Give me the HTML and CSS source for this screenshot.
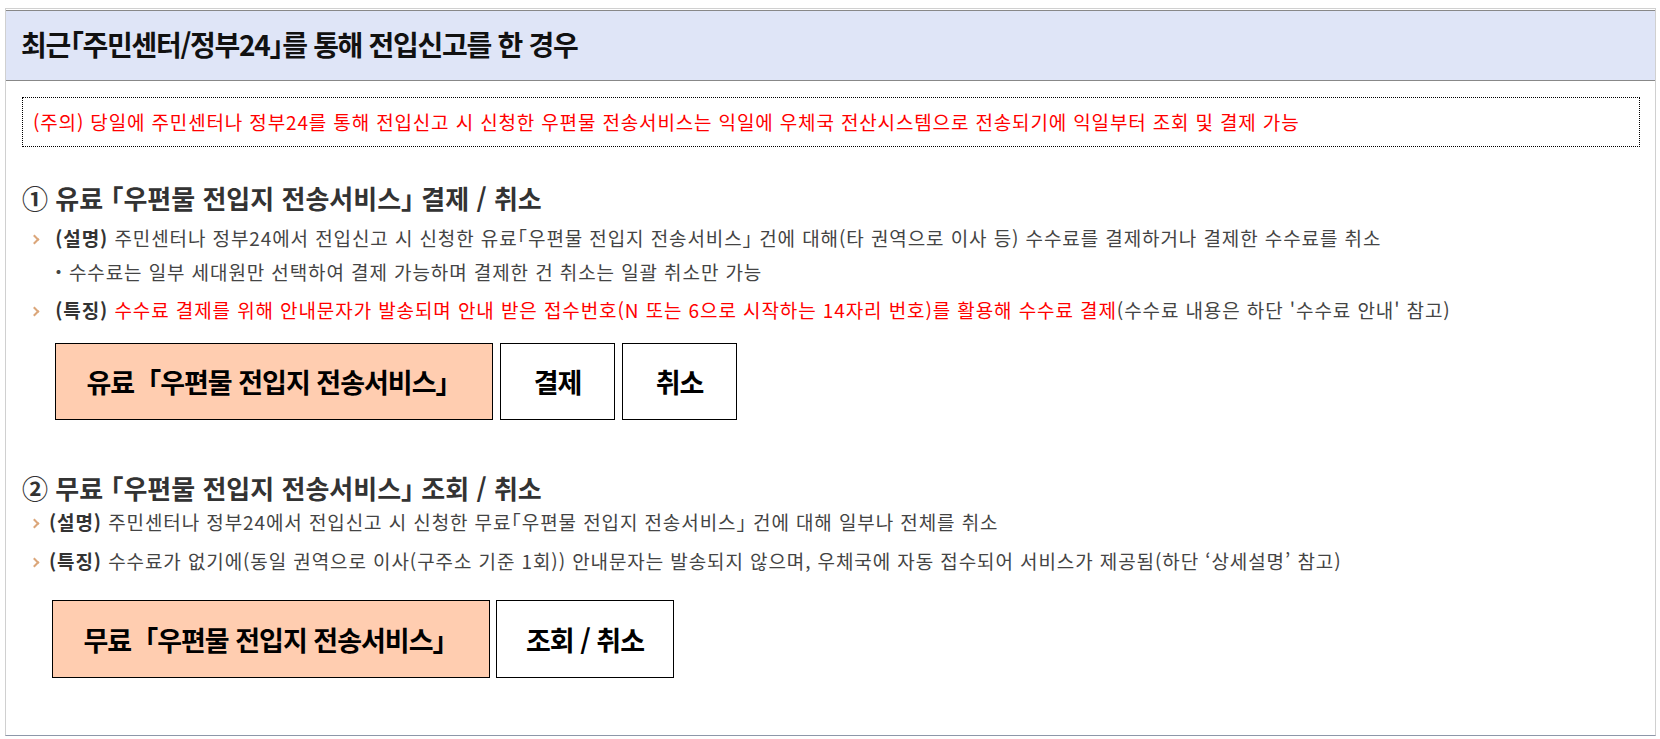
FILE: index.html
```html
<!DOCTYPE html>
<html lang="ko">
  <head>
    <meta charset="UTF-8" />
    <meta name="viewport" content="width=device-width, initial-scale=1.0" />
    <title>전입신고 우편물 전송서비스</title>
    <link rel="stylesheet" href="styles.css">
  </head>
  <body>
    <div class="box">
      <h2 class="box-title">최근「주민센터/정부24」를 통해 전입신고를 한 경우</h2>

      <div class="box-body">
        <p class="notice">(주의) 당일에 주민센터나 정부24를 통해 전입신고 시 신청한 우편물 전송서비스는 익일에 우체국 전산시스템으로 전송되기에 익일부터 조회 및 결제 가능</p>

        <!-- 유료 서비스 -->
        <div class="sec sec-pay">
          <h3 class="sec-title">① 유료 「우편물 전입지 전송서비스」 결제 / 취소</h3>
          <ul class="info">
            <li>
              <b>(설명)</b> 주민센터나 정부24에서 전입신고 시 신청한 유료「우편물 전입지 전송서비스」 건에 대해(타 권역으로 이사 등) 수수료를 결제하거나 결제한 수수료를 취소
              <p class="sub">・수수료는 일부 세대원만 선택하여 결제 가능하며 결제한 건 취소는 일괄 취소만 가능</p>
            </li>
            <li>
              <b>(특징)</b> <span class="red">수수료 결제를 위해 안내문자가 발송되며 안내 받은 접수번호(N 또는 6으로 시작하는 14자리 번호)를 활용해 수수료 결제</span>(수수료 내용은 하단 '수수료 안내' 참고)
            </li>
          </ul>
          <div class="btns">
            <span class="btn btn-label">유료「우편물 전입지 전송서비스」</span>
            <a href="#" class="btn">결제</a>
            <a href="#" class="btn">취소</a>
          </div>
        </div>

        <!-- 무료 서비스 -->
        <div class="sec sec-free">
          <h3 class="sec-title">② 무료 「우편물 전입지 전송서비스」 조회 / 취소</h3>
          <ul class="info">
            <li><b>(설명)</b> 주민센터나 정부24에서 전입신고 시 신청한 무료「우편물 전입지 전송서비스」 건에 대해 일부나 전체를 취소</li>
            <li><b>(특징)</b> 수수료가 없기에(동일 권역으로 이사(구주소 기준 1회)) 안내문자는 발송되지 않으며, 우체국에 자동 접수되어 서비스가 제공됨(하단 ‘상세설명’ 참고)</li>
          </ul>
          <div class="btns">
            <span class="btn btn-label">무료「우편물 전입지 전송서비스」</span>
            <a href="#" class="btn btn-wide">조회 / 취소</a>
          </div>
        </div>
      </div>
    </div>
  </body>
</html>
```

FILE: styles.css
```css
body {
  margin: 0;
  font-family: "Noto Sans CJK KR", "Noto Sans", sans-serif;
  color: #444;
  background: #fff;
}
.box {
  margin: 8px 4px 0 5px;
  padding-top: 1px;
  border: 1px solid #d0d0d0;
  border-bottom-color: #8e97a9;
}
.box-title {
  margin: 0;
  height: 69px;
  line-height: 67px;
  padding-left: 15px;
  background: #dfe5f7;
  border-top: 1px solid #888;
  border-bottom: 1px solid #888;
  font-size: 28px;
  font-weight: bold;
  letter-spacing: -1.3px;
  color: #111;
  font-feature-settings: "halt";
}
.box-body {
  padding: 16px 15px 57px 16px;
}
.notice {
  margin: 0;
  padding: 11px 10px;
  border: 1px dotted #000;
  font-size: 19px;
  line-height: 26px;
  letter-spacing: 0.85px;
  color: #f00;
}
.sec-title {
  margin: 34px 0 0;
  font-size: 26px;
  line-height: 34px;
  font-weight: bold;
  letter-spacing: 0;
  color: #333;
  font-feature-settings: "halt";
}
.info {
  list-style: none;
  margin: 6px 0 0;
  padding: 0;
  font-size: 19px;
  line-height: 34px;
  letter-spacing: 0.9px;
  font-feature-settings: "halt";
}
.info li {
  padding-left: 27px;
}
.info li + li {
  margin-top: 4px;
}
.info li::before {
  content: "";
  display: inline-block;
  width: 5px;
  height: 5px;
  border-top: 2px solid #dba67a;
  border-right: 2px solid #dba67a;
  transform: rotate(45deg);
  margin: 0 11px 3px -18px;
  vertical-align: middle;
}
.info b {
  color: #333;
}
.sub {
  margin: 0;
  font-feature-settings: normal;
}
.red {
  color: #f00;
}
.btns {
  display: flex;
  gap: 7px;
  margin: 16px 0 0 33px;
}
.btn {
  display: flex;
  align-items: center;
  justify-content: center;
  box-sizing: border-box;
  width: 115px;
  height: 77px;
  border: 1px solid #000;
  background: #fff;
  color: #000;
  font-size: 27px;
  font-weight: bold;
  letter-spacing: -1px;
  text-decoration: none;
}
.btn-label {
  width: 438px;
  background: #ffcdb0;
}
.btn-wide {
  width: 178px;
}
.sec-free .sec-title {
  margin-top: 51px;
}
.sec-free .info {
  margin-top: 0;
}
.sec-free .info li + li {
  margin-top: 5px;
}
.sec-free .btns {
  gap: 6px;
  margin: 22px 0 0 30px;
}
.sec-free .btn {
  height: 78px;
}
```
